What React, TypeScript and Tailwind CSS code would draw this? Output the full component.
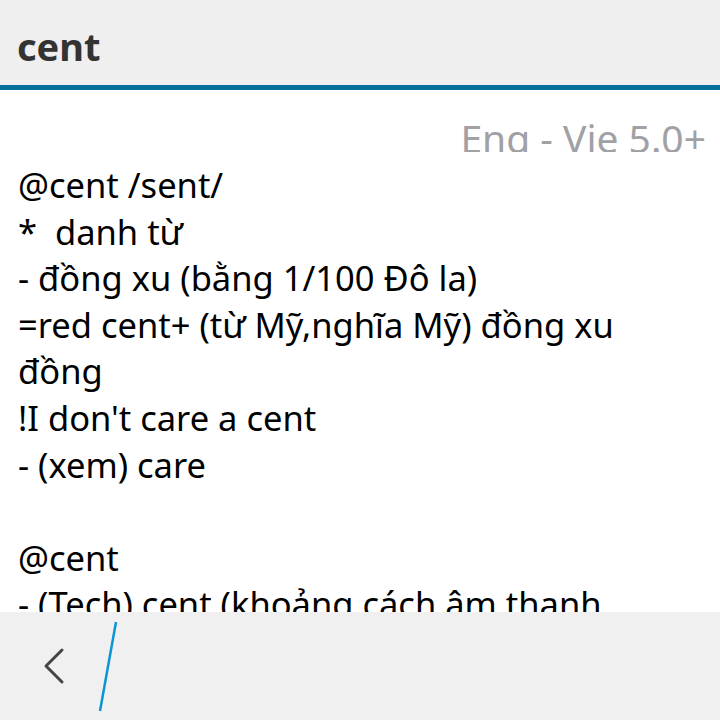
import React from "react";

const lines = [
  "@cent /sent/",
  "*  danh từ",
  "- đồng xu (bằng 1/100 Đô la)",
  "=red cent+ (từ Mỹ,nghĩa Mỹ) đồng xu",
  "đồng",
  "!I don't care a cent",
  "- (xem) care",
  "\u00a0",
  "@cent",
  "- (Tech) cent (khoảng cách âm thanh",
];

export default function App() {
  return (
    <div className="w-[720px] h-[720px] flex flex-col bg-white overflow-hidden" style={{ fontFamily: '"Noto Sans", sans-serif' }}>
      <div className="h-[85px] shrink-0 bg-[#efefef] flex items-center px-[17px]">
        <span className="text-[38px] font-bold text-[#333333] leading-none mt-[6px]">cent</span>
      </div>
      <div className="h-[5px] shrink-0 bg-[#086f9c]" />
      <div className="flex-1 overflow-hidden">
        <div className="h-[62px] overflow-hidden flex justify-end pr-[14px]">
          <span className="text-[39px] text-[#a0a0a5] leading-none mt-[28px]">Eng - Vie 5.0+</span>
        </div>
        <div className="px-[18px] mt-[10px] text-[34.5px] leading-[46.6px] text-black">
          {lines.map((l, i) => (
            <div key={i} className="whitespace-pre">{l}</div>
          ))}
        </div>
      </div>
      <div className="h-[108px] shrink-0 bg-[#f0f0f0] relative">
        <svg width="720" height="108" viewBox="0 0 720 108" className="absolute left-0 top-0">
          <polyline points="62,38 46,54 62,70" fill="none" stroke="#444444" strokeWidth="3" strokeLinecap="round" strokeLinejoin="round" />
          <line x1="116" y1="10" x2="100" y2="99" stroke="#0a96d4" strokeWidth="2.5" />
        </svg>
      </div>
    </div>
  );
}
